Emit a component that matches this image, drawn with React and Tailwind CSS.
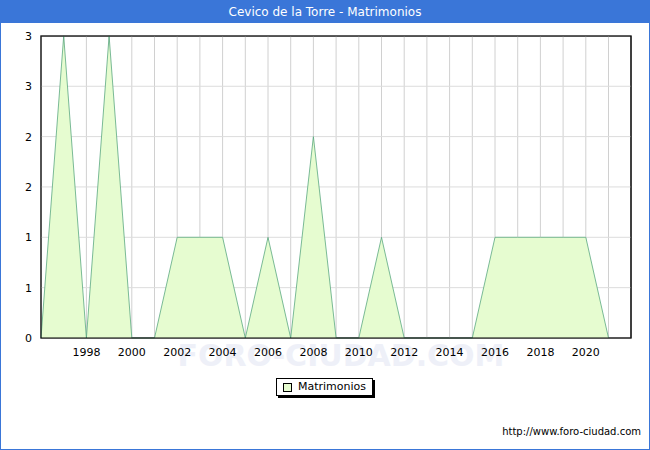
import React from "react";

const data = [0, 3, 0, 3, 0, 0, 1, 1, 1, 0, 1, 0, 2, 0, 0, 1, 0, 0, 0, 0, 1, 1, 1, 1, 1, 0];
const X0 = 40, DX = 22.7, Y0 = 337, DY = 100.7;

const Chart = () => {
  const pts = data.map((v, i) => `${X0 + i * DX},${Y0 - v * DY}`);
  const area = `${X0},${Y0} ${pts.join(" ")} ${X0 + (data.length - 1) * DX},${Y0}`;
  const ys = [0, 0.5, 1, 1.5, 2, 2.5, 3];
  const labels = ["0", "1", "1", "2", "2", "3", "3"];
  return (
    <svg width="648" height="372" className="block">
      <text x="340" y="365" textAnchor="middle" fontSize="30" fill="#eef0f8" fontWeight="bold">FORO-CIUDAD.COM</text>
      <rect x="40" y="35" width="590" height="302" fill="white" stroke="#000" strokeWidth="1" />
      {Array.from({ length: 26 }, (_, i) => (
        <line key={i} x1={X0 + i * DX} x2={X0 + i * DX} y1="35" y2="337" stroke="#d0d0d0" />
      ))}
      {ys.map((v, i) => (
        <g key={i}>
          <line x1="40" x2="630" y1={Y0 - v * DY} y2={Y0 - v * DY} stroke="#dcdcdc" />
          <text x="31" y={Y0 - v * DY + 4} textAnchor="end" fontSize="11" fill="#000">{labels[i]}</text>
        </g>
      ))}
      <polygon points={area} fill="#e6fcd0" />
      <polyline points={pts.join(" ")} fill="none" stroke="#5aa880" strokeWidth="0.8" />
      <rect x="40" y="35" width="590" height="302" fill="none" stroke="#000" strokeWidth="1" />
      {[1998, 2000, 2002, 2004, 2006, 2008, 2010, 2012, 2014, 2016, 2018, 2020].map((y) => (
        <text key={y} x={X0 + (y - 1996) * DX} y="355" textAnchor="middle" fontSize="11" fill="#000">{y}</text>
      ))}
    </svg>
  );
};

export default function App() {
  return (
    <div className="w-[650px] h-[450px] border border-[#3a76d8] bg-white flex flex-col" style={{ fontFamily: "'DejaVu Sans', sans-serif" }}>
      <div className="h-[22px] bg-[#3a76d8] text-white text-[12px] flex items-center justify-center relative z-10">Cevico de la Torre - Matrimonios</div>
      <div className="h-[350px] -mt-[22px] relative">
        <div className="absolute left-0 top-0"><Chart /></div>
      </div>
      <div className="flex justify-center mt-[27px] ml-[-1px] relative z-10">
        <div className="flex items-center gap-[6px] px-[6px] h-[18px] bg-white border border-black shadow-[2px_2px_0_#000] text-[11px]">
          <span className="w-[9px] h-[9px] border border-black bg-[#e6fcd0]" />
          Matrimonios
        </div>
      </div>
      <div className="flex-1" />
      <div className="text-[10px] text-right pr-[8px] pb-[10px]">http://www.foro-ciudad.com</div>
    </div>
  );
}
